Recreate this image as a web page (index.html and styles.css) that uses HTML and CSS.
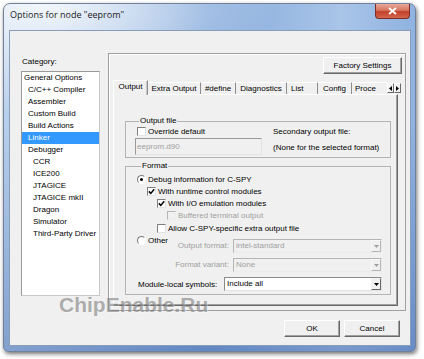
FILE: index.html
```html
<!DOCTYPE html>
<html lang="en">
<head>
  <meta charset="UTF-8">
  <title>Options for node "eeprom"</title>
  <link rel="stylesheet" href="styles.css">
</head>
<body>
  <div class="window">
    <div class="titlebar">
      <span class="title">Options for node &quot;eeprom&quot;</span>
      <div class="close">
        <svg width="9" height="8" viewBox="0 0 9 8"><path d="M1 1 L8 7 M8 1 L1 7" stroke="#fff" stroke-width="1.8"/></svg>
      </div>
    </div>

    <div class="client">
      <div class="main">
        <div class="category">
          <div class="category-label">Category:</div>
          <ul class="category-list">
            <li class="lvl0">General Options</li>
            <li class="lvl1">C/C++ Compiler</li>
            <li class="lvl1">Assembler</li>
            <li class="lvl1">Custom Build</li>
            <li class="lvl1">Build Actions</li>
            <li class="lvl1 selected">Linker</li>
            <li class="lvl1">Debugger</li>
            <li class="lvl2">CCR</li>
            <li class="lvl2">ICE200</li>
            <li class="lvl2">JTAGICE</li>
            <li class="lvl2">JTAGICE mkII</li>
            <li class="lvl2">Dragon</li>
            <li class="lvl2">Simulator</li>
            <li class="lvl2">Third-Party Driver</li>
          </ul>
        </div>

        <div class="panel">
          <div class="panel-top">
            <button class="btn factory">Factory Settings</button>
          </div>

          <div class="tabs">
            <div class="tab active w-output">Output</div>
            <div class="tab w-extra">Extra Output</div>
            <div class="tab w-define">#define</div>
            <div class="tab w-diag">Diagnostics</div>
            <div class="tab w-list">List</div>
            <div class="tab w-config">Config</div>
            <div class="tab w-proc">Proce</div>
            <div class="tab-scroll">
              <span class="scroll-btn"><svg width="3" height="5" viewBox="0 0 3 5"><path d="M3 0 L0 2.5 L3 5 Z" fill="#000"/></svg></span>
              <span class="scroll-btn"><svg width="3" height="5" viewBox="0 0 3 5"><path d="M0 0 L3 2.5 L0 5 Z" fill="#000"/></svg></span>
            </div>
          </div>

          <div class="tab-page">
            <fieldset class="group output-file">
              <legend>Output file</legend>
              <div class="of-left">
                <div class="ctl">
                  <span class="check"></span>
                  <span>Override default</span>
                </div>
                <div class="edit disabled">eeprom.d90</div>
              </div>
              <div class="of-right">
                <div class="sec-title">Secondary output file:</div>
                <div class="sec-value">(None for the selected format)</div>
              </div>
            </fieldset>

            <fieldset class="group format">
              <legend>Format</legend>
              <div class="ctl">
                <span class="radio checked"></span>
                <span>Debug information for C-SPY</span>
              </div>
              <div class="ctl ind1">
                <span class="check"><svg width="7" height="7" viewBox="0 0 7 7"><path d="M0.8 3.4 L2.8 5.4 L6.2 1.2" fill="none" stroke="#000" stroke-width="1.5"/></svg></span>
                <span>With runtime control modules</span>
              </div>
              <div class="ctl ind2">
                <span class="check"><svg width="7" height="7" viewBox="0 0 7 7"><path d="M0.8 3.4 L2.8 5.4 L6.2 1.2" fill="none" stroke="#000" stroke-width="1.5"/></svg></span>
                <span>With I/O emulation modules</span>
              </div>
              <div class="ctl ind3 disabled">
                <span class="check"></span>
                <span>Buffered terminal output</span>
              </div>
              <div class="ctl ind2 allow">
                <span class="check"></span>
                <span>Allow C-SPY-specific extra output file</span>
              </div>

              <div class="fmt-row first">
                <div class="fmt-left">
                  <div class="ctl">
                    <span class="radio"></span>
                    <span>Other</span>
                  </div>
                  <span class="fmt-label">Output format:</span>
                </div>
                <div class="combo disabled">
                  <span class="combo-text">intel-standard</span>
                  <span class="combo-btn"><svg width="5" height="3" viewBox="0 0 5 3"><path d="M0 0 L5 0 L2.5 3 Z" fill="#a0a0a0"/></svg></span>
                </div>
              </div>

              <div class="fmt-row">
                <span class="fmt-label">Format variant:</span>
                <div class="combo disabled">
                  <span class="combo-text">None</span>
                  <span class="combo-btn"><svg width="5" height="3" viewBox="0 0 5 3"><path d="M0 0 L5 0 L2.5 3 Z" fill="#a0a0a0"/></svg></span>
                </div>
              </div>

              <div class="fmt-row symbols">
                <span class="sym-label">Module-local symbols:</span>
                <div class="combo">
                  <span class="combo-text">Include all</span>
                  <span class="combo-btn"><svg width="5" height="3" viewBox="0 0 5 3"><path d="M0 0 L5 0 L2.5 3 Z" fill="#000"/></svg></span>
                </div>
              </div>
            </fieldset>
          </div>
        </div>
      </div>

      <div class="actions">
        <button class="btn">OK</button>
        <button class="btn">Cancel</button>
      </div>
    </div>
  </div>

  <div class="watermark">ChipEnable.Ru</div>
</body>
</html>
```

FILE: styles.css
```css
* {
  box-sizing: border-box;
  margin: 0;
  padding: 0;
}

body {
  position: relative;
  width: 424px;
  height: 359px;
  overflow: hidden;
  background-color: #fff;
  font-family: "Liberation Sans", Arial, sans-serif;
  font-size: 8px;
  color: #000;
}

/* window frame */
.window {
  display: flex;
  flex-direction: column;
  width: 413px;
  height: 349px;
  margin: 3px 0 0 3px;
  padding: 0 4px 5px 5px;
  border: 1px solid #6f819b;
  border-radius: 7px 7px 5px 5px;
  background:
    radial-gradient(ellipse 230px 110px at 40px 0, rgba(255, 255, 255, 0.85), rgba(255, 255, 255, 0)),
    linear-gradient(180deg, rgba(0, 0, 0, 0) 35%, rgba(30, 70, 150, 0.35) 100%),
    linear-gradient(90deg, #b9d0ec 0%, #86abdc 50%, #a9c5e8 82%, #8fb2e0 100%);
  box-shadow: 1px 2px 4px rgba(0, 0, 0, 0.55);
}

.titlebar {
  display: flex;
  align-items: flex-start;
  height: 26px;
}

.title {
  margin-top: 4px;
  padding-left: 1px;
  font-family: "Open Sans", "Liberation Sans", sans-serif;
  font-size: 9px;
  line-height: 13px;
  color: #1a1a1a;
}

.close {
  display: flex;
  align-items: center;
  justify-content: center;
  width: 35px;
  height: 15px;
  margin-left: auto;
  margin-right: 1px;
  border: 1px solid #7d2b24;
  border-top: none;
  border-radius: 0 0 4px 4px;
  background: linear-gradient(#eaa99b, #d77560 45%, #c2402a 55%, #d3674f);
}

.client {
  flex: 1;
  padding: 22px 4px 0 11px;
  border: 1px solid #8a9db8;
  background-color: #f0f0f0;
}

.main {
  display: flex;
  gap: 8px;
}

/* category tree */
.category {
  width: 79px;
}

.category-label {
  margin-top: 4px;
  line-height: 10px;
  padding-left: 1px;
}

.category-list {
  list-style: none;
  height: 225px;
  margin-top: 4px;
  border: 1px solid #9a9a9a;
  border-right-color: #c8c8c8;
  border-bottom-color: #c8c8c8;
  background-color: #fff;
}

.category-list li {
  height: 12px;
  line-height: 12px;
  white-space: nowrap;
}

.lvl0 { padding-left: 2px; }
.lvl1 { padding-left: 6px; }
.lvl2 { padding-left: 11px; }

.category-list .selected {
  background-color: #3399ff;
  color: #fff;
}

/* right panel */
.panel {
  display: flex;
  flex: 1;
  flex-direction: column;
  height: 258px;
  padding: 3px 3px 0 4px;
  border: 1px solid #a0a0a0;
  box-shadow: inset 1px 1px 0 #fff;
}

.panel-top {
  display: flex;
  justify-content: flex-end;
}

.btn {
  height: 17px;
  border: 1px solid;
  border-color: #fff #696969 #696969 #fff;
  background-color: #f0f0f0;
  box-shadow: inset -1px -1px 0 #a0a0a0;
  font: inherit;
  color: #000;
}

.factory {
  width: 79px;
}

/* tabs */
.tabs {
  display: flex;
  align-items: flex-end;
  height: 14px;
  margin-top: 6px;
}

.tab {
  height: 12px;
  line-height: 11px;
  text-align: center;
  white-space: nowrap;
  border-top: 1px solid #fff;
  border-right: 1px solid #8c8c8c;
}

.tab.active {
  position: relative;
  z-index: 1;
  height: 15px;
  margin-bottom: -1px;
  line-height: 12px;
  border-left: 1px solid #fff;
  background-color: #f0f0f0;
  box-shadow: inset -1px 0 0 #c8c8c8;
}

.w-output { width: 35px; }
.w-extra { width: 53px; }
.w-define { width: 35px; }
.w-diag { width: 51px; }
.w-list { width: 31px; text-align: left; padding-left: 4px; }
.w-config { width: 34px; }
.w-proc { width: 35px; text-align: left; padding-left: 3px; border-right: none; }

.tab-scroll {
  display: flex;
  align-self: center;
  margin-top: 2px;
}

.scroll-btn {
  display: flex;
  align-items: center;
  justify-content: center;
  width: 7px;
  height: 10px;
  border: 1px solid;
  border-color: #fff #696969 #696969 #fff;
  background-color: #f0f0f0;
}

.tab-page {
  width: 285px;
  height: 212px;
  padding: 21px 6px 0 11px;
  border: 1px solid;
  border-color: #fff #696969 #696969 #fff;
  box-shadow: inset -1px -1px 0 #a0a0a0;
}

/* group boxes */
.group {
  border: 1px solid #b4b4b4;
}

.group legend {
  margin-left: 4px;
  padding: 0 1px;
  line-height: 10px;
}

.output-file {
  display: grid;
  grid-template-columns: 127px auto;
  column-gap: 11px;
  padding: 0 0 2px 9px;
}

.output-file .ctl {
  height: 10px;
  margin-left: 2px;
}

.edit {
  height: 17px;
  margin-top: 2px;
  padding-left: 1px;
  line-height: 15px;
  border: 1px solid;
  border-color: #9a9a9a #e3e3e3 #e3e3e3 #9a9a9a;
}

.edit.disabled {
  background-color: #f0f0f0;
  color: #a0a0a0;
}

.sec-title {
  margin-top: 1px;
  line-height: 10px;
}

.sec-value {
  margin-top: 6px;
  line-height: 10px;
}

.format {
  margin-top: 3px;
  padding: 2px 8px 3px 11px;
}

/* checkboxes and radios */
.ctl {
  display: flex;
  align-items: center;
  gap: 2px;
  height: 12px;
  white-space: nowrap;
}

.ind1 { margin-left: 10px; }
.ind2 { margin-left: 20px; }
.ind3 { margin-left: 30px; }
.allow { margin-top: 1px; }

.ctl.disabled {
  color: #a0a0a0;
}

.check {
  display: flex;
  align-items: center;
  justify-content: center;
  flex: none;
  width: 9px;
  height: 9px;
  border: 1px solid;
  border-color: #7f7f7f #e3e3e3 #e3e3e3 #7f7f7f;
  background-color: #fff;
}

.ctl.disabled .check {
  border-color: #b5b5b5 #ececec #ececec #b5b5b5;
  background-color: #f0f0f0;
}

.radio {
  display: flex;
  align-items: center;
  justify-content: center;
  flex: none;
  width: 9px;
  height: 9px;
  border: 1px solid;
  border-color: #7a7a7a #fff #fff #7a7a7a;
  border-radius: 50%;
  background-color: #fff;
}

.radio.checked::after {
  content: "";
  width: 3px;
  height: 3px;
  border-radius: 50%;
  background-color: #000;
}

/* format selectors */
.fmt-row {
  display: grid;
  grid-template-columns: 1fr 149px;
  column-gap: 4px;
  align-items: center;
  margin-top: 5px;
}

.fmt-row.first {
  align-items: end;
  margin-top: 0;
}

.fmt-left {
  display: flex;
  justify-content: space-between;
  height: 19px;
}

.fmt-left .ctl {
  align-self: flex-start;
}

.fmt-label {
  align-self: flex-end;
  line-height: 14px;
  text-align: right;
  color: #a0a0a0;
}

.fmt-row.symbols {
  grid-template-columns: 1fr 158px;
}

.sym-label {
  padding-left: 1px;
}

.combo {
  display: flex;
  height: 14px;
  border: 1px solid;
  border-color: #8a8a8a #e3e3e3 #e3e3e3 #8a8a8a;
  background-color: #fff;
}

.combo.disabled {
  background-color: #f0f0f0;
  border-color: #b5b5b5 #ececec #ececec #b5b5b5;
  color: #a0a0a0;
}

.combo-text {
  flex: 1;
  padding-left: 2px;
  line-height: 12px;
}

.combo-btn {
  display: flex;
  align-items: center;
  justify-content: center;
  width: 10px;
  border: 1px solid;
  border-color: #f4f4f4 #696969 #696969 #f4f4f4;
  background-color: #f0f0f0;
}

.combo.disabled .combo-btn {
  border-color: #f8f8f8 #b5b5b5 #b5b5b5 #f8f8f8;
}

/* dialog buttons */
.actions {
  display: flex;
  justify-content: flex-end;
  gap: 4px;
  margin-top: 9px;
  padding-right: 6px;
}

.actions .btn {
  width: 56px;
}

/* site watermark laid over the screenshot */
.watermark {
  position: absolute;
  left: 59px;
  top: 294px;
  font-size: 21px;
  font-weight: bold;
  line-height: 21px;
  color: rgba(100, 100, 100, 0.5);
  text-shadow: 1px 1px 0 rgba(255, 255, 255, 0.4);
}
```
